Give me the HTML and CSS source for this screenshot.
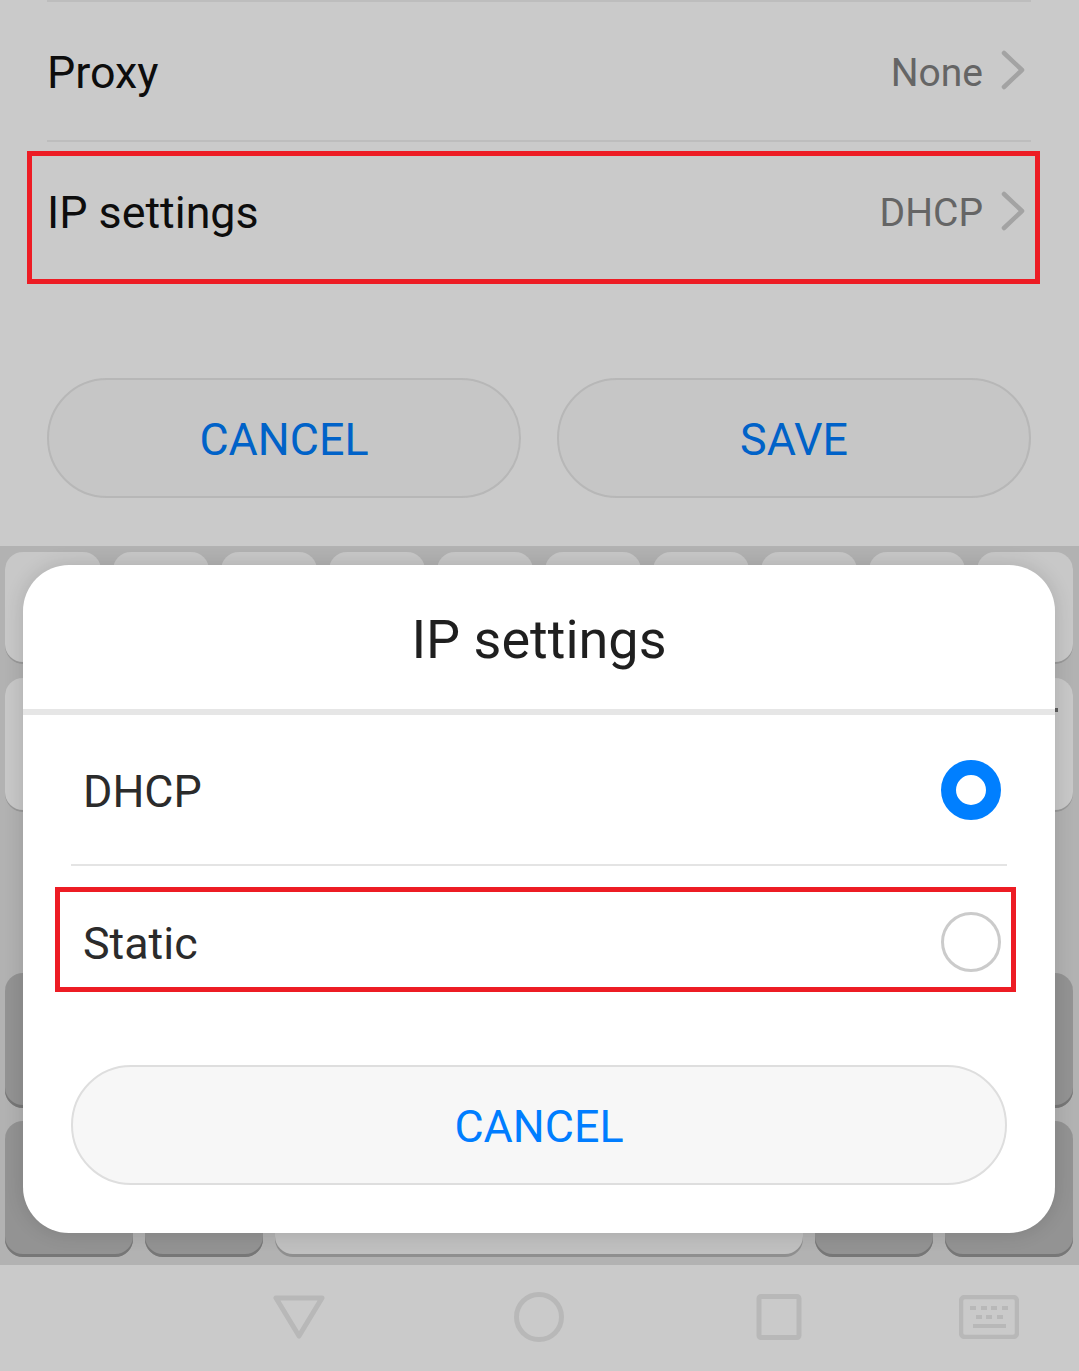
FILE: index.html
```html
<!DOCTYPE html>
<html lang="en">
<head>
<meta charset="utf-8">
<title>IP settings</title>
<link rel="stylesheet" href="styles.css">
</head>
<body>
<div class="screen">
  <section class="settings">
    <div class="row row-proxy">
      <span class="row-label">Proxy</span>
      <span class="row-value">None</span>
      <svg class="chev" viewBox="0 0 24 40"><path d="M3 3 L21 20 L3 37"/></svg>
    </div>
    <div class="row row-ip">
      <span class="row-label">IP settings</span>
      <span class="row-value">DHCP</span>
      <svg class="chev" viewBox="0 0 24 40"><path d="M3 3 L21 20 L3 37"/></svg>
      <div class="mark mark-ip"></div>
    </div>
    <div class="actions">
      <div class="pill">CANCEL</div>
      <div class="pill">SAVE</div>
    </div>
  </section>

  <section class="keyboard">
    <div class="kb-row kb-r1">
      <i class="key"></i><i class="key"></i><i class="key"></i><i class="key"></i><i class="key"></i><i class="key"></i><i class="key"></i><i class="key"></i><i class="key"></i><i class="key"></i>
    </div>
    <div class="kb-row kb-r2">
      <i class="key"></i><i class="key"></i><i class="key"></i><i class="key"></i><i class="key"></i><i class="key"></i><i class="key"></i><i class="key"></i><i class="key"></i><i class="key key-glyph"></i>
    </div>
    <div class="kb-row kb-r3"></div>
    <div class="kb-row kb-r4">
      <i class="key key-dark key-side"></i><i class="key key-dark key-side"></i>
    </div>
    <div class="kb-row kb-r5">
      <i class="key key-dark key-fn1"></i><i class="key key-dark key-fn2"></i><i class="key key-space"></i><i class="key key-dark key-fn2"></i><i class="key key-dark key-fn1"></i>
    </div>
  </section>

  <nav class="navbar">
    <svg class="nav-icon nav-back" viewBox="0 0 52 46"><path d="M3 3 H49 L26 41 Z"/></svg>
    <svg class="nav-icon nav-home" viewBox="0 0 50 50"><circle cx="25" cy="25" r="22.500"/></svg>
    <svg class="nav-icon nav-recent" viewBox="0 0 46 46"><rect x="3" y="2.500" width="40" height="41" rx="2"/></svg>
    <svg class="nav-icon nav-kbd" viewBox="0 0 60 44">
      <rect class="kbd-frame" x="2" y="2" width="56" height="40" rx="4"/>
      <g class="kbd-keys">
        <rect x="11" y="11" width="6" height="4"/><rect x="22" y="11" width="6" height="4"/><rect x="32" y="11" width="6" height="4"/><rect x="43" y="11" width="6" height="4"/>
        <rect x="17" y="20" width="6" height="4"/><rect x="27" y="20" width="6" height="4"/><rect x="38" y="20" width="6" height="4"/>
        <rect x="14" y="29" width="33" height="4"/>
      </g>
    </svg>
  </nav>

  <div class="dialog">
    <h2 class="dialog-title">IP settings</h2>
    <div class="option option-first">
      <span>DHCP</span>
      <i class="radio radio-on"></i>
    </div>
    <div class="option option-second">
      <span>Static</span>
      <i class="radio"></i>
      <div class="mark mark-static"></div>
    </div>
    <div class="dialog-cancel">CANCEL</div>
  </div>
</div>
</body>
</html>
```

FILE: styles.css
```css
* { box-sizing: border-box; }
html, body { margin: 0; padding: 0; }
body { background: #cacaca; font-family: Roboto, "Liberation Sans", sans-serif; }

.screen {
  position: relative;
  width: 1079px;
  height: 1371px;
  overflow: hidden;
  background: #cacaca;
  display: flex;
  flex-direction: column;
}

.settings { height: 546px; padding: 0 48px 0 47px; flex: none; }

.row {
  position: relative;
  display: flex;
  align-items: center;
  border-top: 2px solid #bdbdbd;
  padding: 2px 6px 0 0;
}
.row-proxy { height: 140px; }
.row-ip { height: 141px; }
.row-label { flex: 1; font-size: 44.800px; color: #0d0d0d; }
.row-value { font-size: 39px; color: #656565; margin-right: 18px; }
.row-proxy .row-value { padding-top: 2px; }
.chev { width: 24px; height: 40px; margin-top: -4px; }
.chev path { fill: none; stroke: #a3a3a3; stroke-width: 4.500; stroke-linecap: round; stroke-linejoin: round; }

.mark { position: absolute; border: 5px solid #ed1c24; pointer-events: none; }
.mark-ip { left: -20px; top: 9px; width: 1013px; height: 133px; }
.mark-static { left: -16px; top: 21px; width: 961px; height: 105px; }

.actions { display: flex; gap: 36px; margin-top: 97px; }
.pill {
  width: 474px;
  height: 120px;
  border: 2px solid #b7b7b7;
  border-radius: 60px;
  background: #c6c6c6;
  color: #0062c8;
  font-size: 44.800px;
  padding-top: 3px;
  display: flex;
  align-items: center;
  justify-content: center;
}

.keyboard {
  flex: none;
  height: 719px;
  background: #b2b2b2;
  padding: 6px 6px 0 5px;
  display: flex;
  flex-direction: column;
}
.kb-row { display: flex; gap: 12px; flex: none; }
.kb-r1 { height: 112px; }
.kb-r2 { height: 134px; margin-top: 14px; }
.kb-r3 { height: 161px; }
.kb-r4 { height: 135px; justify-content: space-between; }
.kb-r5 { height: 136px; margin-top: 13px; }

.key {
  display: block;
  width: 96px;
  border-radius: 18px;
  background: #c8c8c8;
  box-shadow: inset 0 -2px 0 #9a9a9a;
}
.key-glyph { position: relative; }
.key-glyph::after {
  content: "";
  position: absolute;
  left: 77px;
  top: 30px;
  width: 4px;
  height: 4px;
  background: #5f5f5f;
}
.key-dark { background: #939393; box-shadow: inset 0 -3px 0 #777; }
.key-side { width: 128px; }
.key-fn1 { width: 128px; }
.key-fn2 { width: 118px; }
.key-space {
  width: 528px;
  background: #c0c0c0;
  box-shadow: inset 0 -3px 0 #8f8f8f;
}

.navbar { flex: 1; position: relative; background: #cacaca; z-index: 1; }
.nav-icon { position: absolute; fill: none; stroke: #b8b8b8; stroke-width: 5; stroke-linejoin: round; }
.nav-back { left: 273px; top: 30px; width: 52px; height: 46px; }
.nav-home { left: 514px; top: 27px; width: 50px; height: 50px; }
.nav-recent { left: 756px; top: 29px; width: 46px; height: 46px; }
.nav-kbd { left: 959px; top: 30px; width: 60px; height: 44px; }
.kbd-frame { stroke-width: 4.500; }
.kbd-keys { fill: #b8b8b8; stroke: none; }

.dialog {
  position: absolute;
  z-index: 2;
  left: 23px;
  top: 565px;
  width: 1032px;
  height: 668px;
  background: #fff;
  border-radius: 46px;
  box-shadow: 0 0 20px rgba(0, 0, 0, 0.14);
  display: flex;
  flex-direction: column;
}
.dialog-title {
  margin: 0;
  height: 150px;
  border-bottom: 6px solid #e6e6e6;
  flex: none;
  display: flex;
  align-items: center;
  justify-content: center;
  font-size: 54px;
  font-weight: 400;
  color: #1f1f1f;
  padding-top: 4px;
}
.option {
  position: relative;
  margin: 0 48px;
  display: flex;
  align-items: center;
  justify-content: space-between;
  color: #2b2b2b;
  font-size: 44.800px;
  padding: 0 6px 0 12px;
  flex: none;
}
.option span { padding-top: 3px; }
.option-first { height: 151px; border-bottom: 2px solid #e4e4e4; }
.option-second { height: 152px; }
.radio {
  display: block;
  width: 60px;
  height: 60px;
  border-radius: 50%;
  border: 3px solid #cbcbcb;
  background: #fff;
}
.radio-on { border: 15px solid #007fff; }
.dialog-cancel {
  margin: 47px 48px 0;
  height: 120px;
  border: 2px solid #dedede;
  border-radius: 60px;
  background: #f7f7f7;
  color: #007dff;
  font-size: 44.800px;
  padding-top: 3px;
  display: flex;
  align-items: center;
  justify-content: center;
  flex: none;
}
```
